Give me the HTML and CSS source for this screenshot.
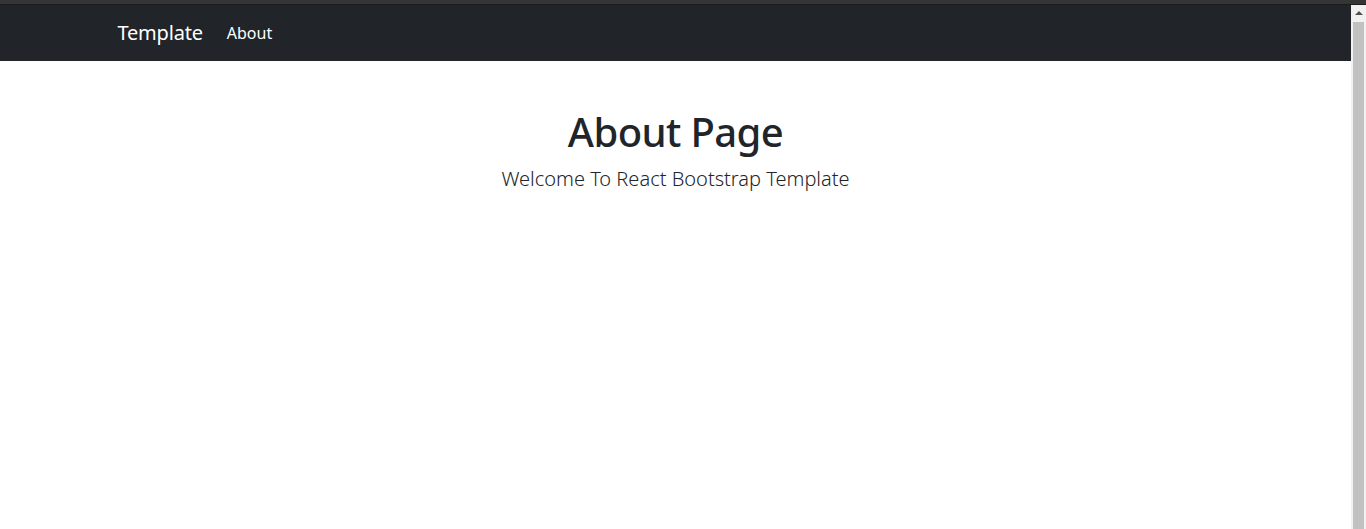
FILE: index.html
```html
<!DOCTYPE html>
<html lang="en">
<head>
<meta charset="utf-8">
<title>Template</title>
<link rel="stylesheet" href="styles.css">
</head>
<body>
<div class="chrome-strip"></div>
<div class="viewport">
  <div class="page">
    <nav class="navbar">
      <div class="container nav-inner">
        <a class="brand" href="#">Template</a>
        <a class="nav-link" href="#">About</a>
      </div>
    </nav>
    <main class="container main">
      <h1 class="title">About Page</h1>
      <p class="lead">Welcome To React Bootstrap Template</p>
    </main>
  </div>
  <div class="scrollbar">
    <div class="sb-arrow"><span class="sb-tri"></span></div>
    <div class="sb-track"><div class="sb-thumb"></div></div>
  </div>
</div>
</body>
</html>
```

FILE: styles.css
```css
html, body {
  margin: 0;
  padding: 0;
  height: 100%;
  overflow: hidden;
  background: #fff;
}
body {
  font-family: "Noto Sans", "Open Sans", sans-serif;
  color: #212529;
  display: flex;
  flex-direction: column;
}
.chrome-strip {
  height: 4px;
  flex: none;
  background: #353535;
  border-bottom: 1px solid #1c1c1c;
}
.viewport {
  flex: 1;
  display: flex;
  min-height: 0;
}
.page {
  flex: 1;
  min-width: 0;
}
.scrollbar {
  width: 15px;
  flex: none;
  background: #f1f1f1;
  display: flex;
  flex-direction: column;
}
.sb-arrow {
  height: 15px;
  display: flex;
  align-items: center;
  justify-content: center;
}
.sb-tri {
  width: 0;
  height: 0;
  border-left: 4px solid transparent;
  border-right: 4px solid transparent;
  border-bottom: 4px solid #505050;
}
.sb-track {
  flex: 1;
  padding: 2px 2px 0;
}
.sb-thumb {
  height: 100%;
  background: #c1c1c1;
}
.navbar {
  background: #212529;
  padding: 8px 0;
}
.container {
  max-width: 1140px;
  margin: 0 auto;
  padding: 0 12px;
  box-sizing: border-box;
}
.nav-inner {
  display: flex;
  align-items: center;
}
.brand {
  color: #fff;
  text-decoration: none;
  font-size: 20px;
  line-height: 30px;
  padding: 5px 0;
  margin-right: 16px;
  letter-spacing: -0.2px;
}
.nav-link {
  color: #fff;
  text-decoration: none;
  font-size: 16px;
  line-height: 24px;
  padding: 8px;
}
.main {
  text-align: center;
  padding-top: 47px;
}
.title {
  margin: 0 0 8px;
  font-size: 40px;
  font-weight: 500;
  line-height: 48px;
  letter-spacing: -0.6px;
}
.lead {
  margin: 0;
  font-size: 20px;
  font-weight: 300;
  line-height: 30px;
}
```
